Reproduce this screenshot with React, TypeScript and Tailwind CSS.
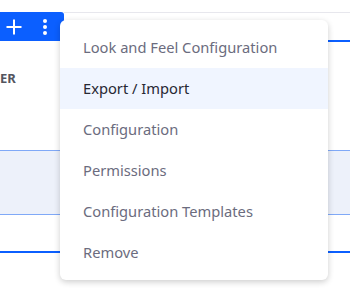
const items = [
  "Look and Feel Configuration",
  "Export / Import",
  "Configuration",
  "Permissions",
  "Configuration Templates",
  "Remove",
]

export default function App() {
  return (
    <div className="relative w-[350px] h-[293px] overflow-hidden bg-white font-['Noto_Sans',sans-serif]">
      {/* page behind the menu */}
      <div className="flex pt-[12px] h-[42px]">
        <div className="flex items-center w-[64px] h-[29px] bg-[#0b5fff] rounded-tr-[3px]">
          <svg width="16" height="16" viewBox="0 0 16 16" className="ml-[6px]">
            <path d="M8 0.5v15M0.5 8h15" stroke="white" strokeWidth="2" />
          </svg>
          <svg width="6" height="16" viewBox="0 0 6 16" className="ml-[20px]">
            <circle cx="3" cy="2" r="2" fill="white" />
            <circle cx="3" cy="8" r="2" fill="white" />
            <circle cx="3" cy="14" r="2" fill="white" />
          </svg>
        </div>
        <div className="flex-1 border-t border-[#e7e7ed] border-b-2 border-b-[#0b5fff]" />
      </div>
      <div className="mt-[28px] text-[13px] font-bold leading-[16px] text-[#54555f]">ER</div>
      <div className="mt-[64px] h-[65px] border-y border-[#80a9f7] bg-[#edf1fa]" />
      <div className="mt-[36px] border-t-2 border-[#0b5fff]" />
      <div className="mt-[36px] text-[12px] font-bold text-[#6b6c7e]">CTOR</div>

      {/* dropdown menu */}
      <div className="absolute left-[60px] top-[20px] w-[268px] py-[7px] bg-white rounded-[6px] shadow-[0_2px_6px_rgba(0,0,0,0.2)]">
        {items.map((label, i) => (
          <div
            key={label}
            className={
              i === 1
                ? "flex items-center h-[41px] pl-[23px] text-[14.7px] bg-[#f0f5ff] text-[#272833]"
                : "flex items-center h-[41px] pl-[23px] text-[14.7px] text-[#6b6c7e]"
            }
          >
            {label}
          </div>
        ))}
      </div>
    </div>
  )
}
